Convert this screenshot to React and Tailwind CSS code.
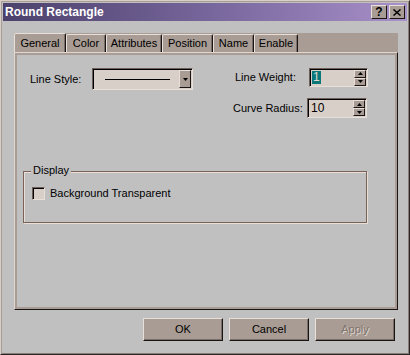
const tabs = [
  { label: 'General', w: 'w-[52px]' },
  { label: 'Color', w: 'w-[40px]' },
  { label: 'Attributes', w: 'w-[56px]' },
  { label: 'Position', w: 'w-[51px]' },
  { label: 'Name', w: 'w-[41px]' },
  { label: 'Enable', w: 'w-[44px]' },
]

function Arrow({ up }) {
  return (
    <svg width="5" height="3" viewBox="0 0 5 3" className="block">
      <polygon points={up ? '2.5,0 5,3 0,3' : '0,0 5,0 2.5,3'} fill="#000" />
    </svg>
  )
}

function SmallBtn({ up }) {
  return (
    <div className="flex-1 flex items-center justify-center bg-[#a89c94] border-t border-l border-t-[#e8e0d8] border-l-[#e8e0d8] border-r border-b border-r-[#1a1414] border-b-[#1a1414]">
      <Arrow up={up} />
    </div>
  )
}

function Spinner({ value, selected, className }) {
  return (
    <div className={`flex items-center bg-[#d8d0c8] border-t border-l border-t-[#6e5e56] border-l-[#6e5e56] border-r border-b border-r-[#e8e0d8] border-b-[#e8e0d8] shadow-[inset_1px_1px_0_#000] ${className}`}>
      <span className={`ml-[2px] leading-[13px] text-[12px] ${selected ? 'bg-[#0a7878] text-[#e0d8d0] px-[1px]' : 'pl-[1px]'}`}>{value}</span>
      <div className="ml-auto mr-[1px] w-[12px] h-[16px] flex flex-col">
        <SmallBtn up />
        <SmallBtn />
      </div>
    </div>
  )
}

function Button({ children, disabled }) {
  return (
    <button className="w-[80px] h-[23px] bg-[#a89c94] border-t border-l border-t-[#e8e0d8] border-l-[#e8e0d8] border-r border-b border-r-[#1a1414] border-b-[#1a1414] shadow-[inset_-1px_-1px_0_#7a6e68] flex items-center justify-center">
      <span className={disabled ? 'text-[#80746e] [text-shadow:1px_1px_0_#e0d8d0]' : 'text-black'}>{children}</span>
    </button>
  )
}

export default function App() {
  return (
    <div className="w-[410px] h-[355px] bg-[#c0c0c0] border border-t-[#d8d0c8] border-l-[#d8d0c8] border-r-[#2a2424] border-b-[#2a2424] shadow-[inset_1px_1px_0_#a89c94,inset_-1px_-1px_0_#8a7c76] font-['Liberation_Sans',Arial,sans-serif] text-[11px] text-black select-none">
      {/* title bar */}
      <div className="mx-[2px] mt-[2px] h-[18px] flex items-center justify-between pl-[2px] pr-[2px] bg-linear-to-r from-[#4c416c] via-[#76659a] to-[#a890c8]">
        <span className="text-white font-bold text-[12px] leading-none">Round Rectangle</span>
        <div className="flex gap-[2px]">
          <div className="w-[16px] h-[14px] bg-[#a89c94] border-t border-l border-t-[#e8e0d8] border-l-[#e8e0d8] border-r border-b border-r-[#1a1414] border-b-[#1a1414] flex items-center justify-center font-bold text-[12px] leading-none">?</div>
          <div className="w-[16px] h-[14px] bg-[#a89c94] border-t border-l border-t-[#e8e0d8] border-l-[#e8e0d8] border-r border-b border-r-[#1a1414] border-b-[#1a1414] flex items-center justify-center">
            <svg width="8" height="7" viewBox="0 0 8 7">
              <path d="M0.5 0.5 L7.5 6.5 M7.5 0.5 L0.5 6.5" stroke="#000" strokeWidth="1.5" />
            </svg>
          </div>
        </div>
      </div>

      {/* tabs */}
      <div className="ml-[13px] mt-[12px] w-[384px]">
        <div className="flex items-end h-[19px] bg-[#a89c94]">
          {tabs.map((t, i) => (
            <div
              key={t.label}
              className={`${t.w} ${i === 0 ? 'h-[19px]' : 'h-[18px]'} flex items-center justify-center rounded-t-[2px] bg-[#a89c94] border-t border-l border-t-[#e8e0d8] border-l-[#e8e0d8] border-r border-r-[#1a1414] shadow-[inset_-1px_0_0_#7a6e68]`}
            >
              {t.label}
            </div>
          ))}
        </div>

        {/* panel */}
        <div className="h-[258px] border-t border-l border-t-[#e0d8d0] border-l-[#e0d8d0] border-r border-b border-r-[#1a1414] border-b-[#1a1414] shadow-[inset_2px_2px_0_#a89c94,inset_-2px_-2px_0_#a89c94] pt-[15px]">
          <div className="flex pl-[15px]">
            <div className="flex items-center h-[22px]">
              <span className="w-[62px]">Line Style:</span>
              <div className="w-[101px] h-[22px] flex items-center bg-[#d8d0c8] border-t border-l border-t-[#6e5e56] border-l-[#6e5e56] border-r border-b border-r-[#e8e0d8] border-b-[#e8e0d8] shadow-[inset_1px_1px_0_#000]">
                <div className="ml-[12px] w-[65px] h-[1px] bg-black" />
                <div className="ml-auto mr-[1px] w-[12px] h-[18px] flex items-center justify-center bg-[#a89c94] border-t border-l border-t-[#e8e0d8] border-l-[#e8e0d8] border-r border-b border-r-[#1a1414] border-b-[#1a1414]">
                  <Arrow />
                </div>
              </div>
            </div>

            <div className="ml-[40px] w-[135px] flex flex-col">
              <div className="h-[19px] flex items-center justify-between">
                <span className="pl-[2px]">Line Weight:</span>
                <Spinner value="1" selected className="w-[59px] h-[19px]" />
              </div>
              <div className="mt-[11px] h-[20px] flex items-center justify-between pr-[1px]">
                <span>Curve Radius:</span>
                <Spinner value="10" className="w-[60px] h-[20px]" />
              </div>
            </div>
          </div>

          {/* display group */}
          <div className="relative ml-[8px] mt-[53px] w-[344px] h-[52px] border border-[#7a6258] shadow-[1px_1px_0_#e8e0d8,inset_1px_1px_0_#e8e0d8] pl-[8px] pt-[13px]">
            <span className="absolute top-[-8px] left-[7px] px-[2px] bg-[#c0c0c0] leading-[13px]">Display</span>
            <div className="flex items-center gap-[5px]">
              <div className="w-[13px] h-[13px] bg-[#d8d0c8] border-t border-l border-t-[#6e5e56] border-l-[#6e5e56] border-r border-b border-r-[#e8e0d8] border-b-[#e8e0d8] shadow-[inset_1px_1px_0_#000]" />
              <span>Background Transparent</span>
            </div>
          </div>
        </div>
      </div>

      {/* buttons */}
      <div className="flex gap-[6px] ml-[142px] mt-[8px]">
        <Button>OK</Button>
        <Button>Cancel</Button>
        <Button disabled>Apply</Button>
      </div>
    </div>
  )
}
